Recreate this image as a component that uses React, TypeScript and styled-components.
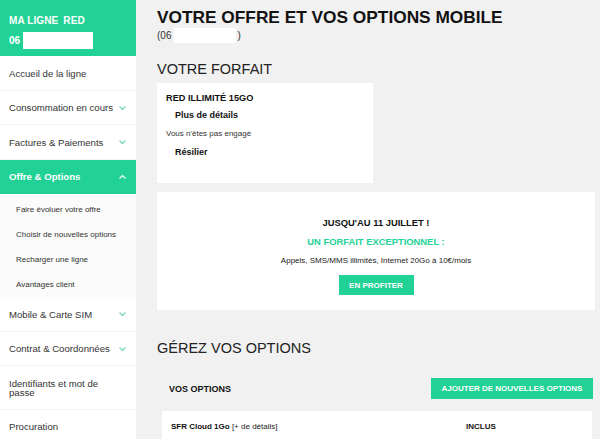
import React from 'react'
import styled, { createGlobalStyle } from 'styled-components'

const GREEN = '#21d195'

const GlobalStyle = createGlobalStyle`
  html, body {
    margin: 0;
    padding: 0;
    height: 100%;
    overflow: hidden;
  }
  body {
    background: #f1f1f1;
    font-family: 'Liberation Sans', Arial, sans-serif;
    color: #222;
  }
`

const Page = styled.div`
  display: flex;
  align-items: flex-start;
  height: 439px;
  overflow: hidden;
`

const Sidebar = styled.nav`
  width: 136px;
  flex-shrink: 0;
  background: #fff;
`

const LineHeader = styled.div`
  background: ${GREEN};
  color: #fff;
  height: 56px;
  box-sizing: border-box;
  padding: 16px 9px 0;
`

const LineTitle = styled.div`
  font-size: 10px;
  line-height: 10px;
  font-weight: 600;
  letter-spacing: 0.1px;

  b {
    font-weight: 700;
    margin-left: 5px;
  }
`

const LineNumber = styled.div`
  display: flex;
  align-items: center;
  margin-top: 6px;
  font-size: 10px;
  font-weight: 700;
`

const Masked = styled.span<{ w: number; h: number }>`
  display: inline-block;
  width: ${({ w }) => w}px;
  height: ${({ h }) => h}px;
  background: #fff;
`

const NavItem = styled.div<{ active?: boolean }>`
  display: flex;
  align-items: center;
  justify-content: space-between;
  gap: 6px;
  padding: 12.5px 10px 12px 9px;
  font-size: 9.6px;
  line-height: 9px;
  color: ${({ active }) => (active ? '#fff' : '#333')};
  background: ${({ active }) => (active ? GREEN : '#fff')};
  font-weight: ${({ active }) => (active ? 700 : 400)};
  border-bottom: 1px solid ${({ active }) => (active ? GREEN : '#f3f3f3')};
`

const SubList = styled.div`
  background: #fbfbfb;
  padding-top: 3px;
`

const SubItem = styled.div`
  padding: 0 16px;
  height: 25px;
  line-height: 25px;
  font-size: 8px;
  color: #333;
`

const Main = styled.main`
  flex: 1;
  min-width: 0;
  padding: 7px 5px 0 21px;
`

const Title = styled.h1`
  margin: 0;
  font-size: 17.3px;
  line-height: 20px;
  font-weight: 700;
  color: #111;
`

const PhoneLine = styled.div`
  display: flex;
  align-items: center;
  height: 16px;
  font-size: 10px;
  color: #333;

  ${Masked} {
    margin: 0 1px 0 3px;
  }
`

const SectionTitle = styled.h2<{ top: number }>`
  margin: ${({ top }) => top}px 0 5px;
  font-size: 14.5px;
  line-height: 17px;
  font-weight: 400;
  color: #222;
`

const ForfaitCard = styled.div`
  width: 216px;
  height: 100px;
  box-sizing: border-box;
  background: #fff;
  padding: 10px 9px;
`

const PlanName = styled.div`
  font-size: 9.2px;
  line-height: 11px;
  font-weight: 700;
  color: #111;
`

const CardLink = styled.div<{ top: number }>`
  margin: ${({ top }) => top}px 0 0 9px;
  font-size: 9px;
  line-height: 11px;
  font-weight: 700;
  color: #111;
`

const CardNote = styled.div`
  margin-top: 8px;
  font-size: 8px;
  line-height: 10px;
  color: #333;
`

const PromoCard = styled.div`
  margin-top: 9px;
  height: 118px;
  box-sizing: border-box;
  background: #fff;
  padding-top: 25px;
  display: flex;
  flex-direction: column;
  align-items: center;
  text-align: center;
`

const PromoLine = styled.div<{ green?: boolean; top: number }>`
  margin-top: ${({ top }) => top}px;
  font-size: 9.4px;
  line-height: 12px;
  font-weight: 700;
  color: ${({ green }) => (green ? GREEN : '#111')};
`

const PromoText = styled.div`
  margin-top: 8px;
  font-size: 8px;
  line-height: 10px;
  color: #222;
`

const GreenButton = styled.button<{ w: number; h: number }>`
  width: ${({ w }) => w}px;
  height: ${({ h }) => h}px;
  border: 0;
  padding: 0;
  background: ${GREEN};
  color: #fff;
  font-family: inherit;
  font-size: 8px;
  font-weight: 700;
  cursor: pointer;
`

const PromoButton = styled(GreenButton)`
  margin-top: 9px;
`

const OptionsHeader = styled.div`
  display: flex;
  align-items: center;
  justify-content: space-between;
  margin-top: 21px;
  padding: 0 2px 0 12px;
`

const OptionsLabel = styled.div`
  font-size: 9px;
  font-weight: 700;
  color: #111;
`

const OptionRow = styled.div`
  display: grid;
  grid-template-columns: 295px 1fr;
  align-items: center;
  margin: 12px 3px 0 5px;
  height: 30px;
  padding: 0 9px;
  background: #fff;
  font-size: 8px;
  color: #222;

  b {
    font-weight: 700;
    color: #111;
  }
`

const Chevron = ({ up, color }: { up?: boolean; color: string }) => (
  <svg width="7" height="4" viewBox="0 0 7 4" style={{ flexShrink: 0 }}>
    <polyline
      points={up ? '0.5,3.5 3.5,0.5 6.5,3.5' : '0.5,0.5 3.5,3.5 6.5,0.5'}
      fill="none"
      stroke={color}
      strokeWidth="1.1"
    />
  </svg>
)

const subItems = ['Faire évoluer votre offre', 'Choisir de nouvelles options', 'Recharger une ligne', 'Avantages client']

export default function App() {
  return (
    <Page>
      <GlobalStyle />
      <Sidebar>
        <LineHeader>
          <LineTitle>
            MA LIGNE<b>RED</b>
          </LineTitle>
          <LineNumber>
            06&nbsp;
            <Masked w={70} h={17} />
          </LineNumber>
        </LineHeader>
        <NavItem>Accueil de la ligne</NavItem>
        <NavItem>
          Consommation en cours <Chevron color="#6fd6b0" />
        </NavItem>
        <NavItem>
          Factures &amp; Paiements <Chevron color="#6fd6b0" />
        </NavItem>
        <NavItem active>
          Offre &amp; Options <Chevron up color="#fff" />
        </NavItem>
        <SubList>
          {subItems.map((s) => (
            <SubItem key={s}>{s}</SubItem>
          ))}
        </SubList>
        <NavItem>
          Mobile &amp; Carte SIM <Chevron color="#6fd6b0" />
        </NavItem>
        <NavItem>
          Contrat &amp; Coordonnées <Chevron color="#6fd6b0" />
        </NavItem>
        <NavItem>Identifiants et mot de passe</NavItem>
        <NavItem>Procuration</NavItem>
      </Sidebar>

      <Main>
        <Title>VOTRE OFFRE ET VOS OPTIONS MOBILE</Title>
        <PhoneLine>
          (06
          <Masked w={62} h={15} />)
        </PhoneLine>

        <SectionTitle top={18}>VOTRE FORFAIT</SectionTitle>
        <ForfaitCard>
          <PlanName>RED ILLIMITÉ 15GO</PlanName>
          <CardLink top={6}>Plus de détails</CardLink>
          <CardNote>Vous n'êtes pas engagé</CardNote>
          <CardLink top={8}>Résilier</CardLink>
        </ForfaitCard>

        <PromoCard>
          <PromoLine top={0}>JUSQU'AU 11 JUILLET !</PromoLine>
          <PromoLine top={7} green>
            UN FORFAIT EXCEPTIONNEL :
          </PromoLine>
          <PromoText>Appels, SMS/MMS illimités, Internet 20Go à 10€/mois</PromoText>
          <PromoButton w={75} h={20}>EN PROFITER</PromoButton>
        </PromoCard>

        <SectionTitle top={30}>GÉREZ VOS OPTIONS</SectionTitle>
        <OptionsHeader>
          <OptionsLabel>VOS OPTIONS</OptionsLabel>
          <GreenButton w={162} h={21}>AJOUTER DE NOUVELLES OPTIONS</GreenButton>
        </OptionsHeader>
        <OptionRow>
          <span>
            <b>SFR Cloud 1Go</b> [+ de détails]
          </span>
          <b>INCLUS</b>
        </OptionRow>
      </Main>
    </Page>
  )
}
